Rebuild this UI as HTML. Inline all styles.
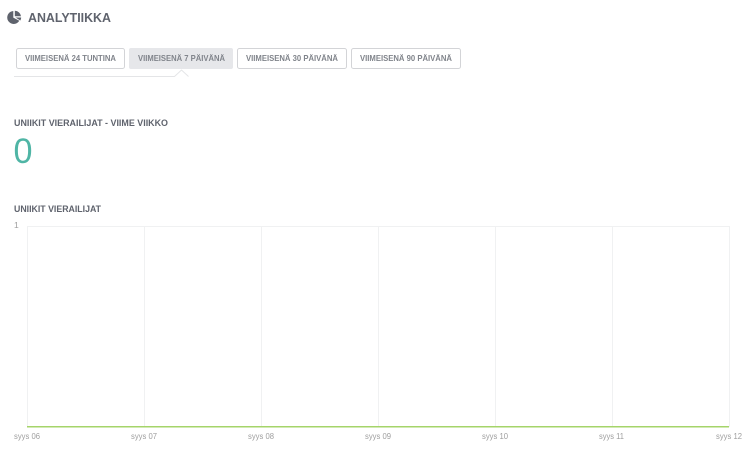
<!DOCTYPE html>
<html lang="fi">
<head>
<meta charset="utf-8">
<title>Analytiikka</title>
<style>
html,body{margin:0;padding:0;background:#fff;width:753px;height:452px;overflow:hidden}
svg{display:block}
text{font-family:"Liberation Sans",sans-serif}
.b{font-weight:700;font-size:8.5px;fill:#80848b}
.h{font-weight:700;font-size:9px;fill:#5f636d}
.a{font-size:8.5px;fill:#9e9e9e}
</style>
</head>
<body>
<svg width="753" height="452" viewBox="0 0 753 452" xmlns="http://www.w3.org/2000/svg">
<!-- header icon -->
<path d="M13.300 11A6.500 6.500 0 1 0 19.300 20.800L13.300 17.600Z" fill="#5f636d"/>
<path d="M14.800 10.800A6.200 6.200 0 0 1 21 16.200H14.800Z" fill="#5f636d"/>
<path d="M15.500 17.500H21.200A6 6 0 0 1 20.300 20.500Z" fill="#5f636d"/>
<text x="28" y="22" font-size="12.500" font-weight="700" fill="#5f636d" textLength="83" lengthAdjust="spacingAndGlyphs">ANALYTIIKKA</text>

<!-- buttons -->
<rect x="16.500" y="48.500" width="108" height="20" rx="2" fill="#fff" stroke="#d3d4d7"/>
<text class="b" x="25" y="61" textLength="91" lengthAdjust="spacingAndGlyphs">VIIMEISENÄ 24 TUNTINA</text>
<rect x="129" y="48" width="104" height="21" rx="2" fill="#e6e7ea"/>
<text class="b" x="138" y="61" textLength="87" lengthAdjust="spacingAndGlyphs">VIIMEISENÄ 7 PÄIVÄNÄ</text>
<rect x="237.500" y="48.500" width="109" height="20" rx="2" fill="#fff" stroke="#d3d4d7"/>
<text class="b" x="246" y="61" textLength="92" lengthAdjust="spacingAndGlyphs">VIIMEISENÄ 30 PÄIVÄNÄ</text>
<rect x="351.500" y="48.500" width="109" height="20" rx="2" fill="#fff" stroke="#d3d4d7"/>
<text class="b" x="360" y="61" textLength="92" lengthAdjust="spacingAndGlyphs">VIIMEISENÄ 90 PÄIVÄNÄ</text>

<!-- tab indicator -->
<path d="M14 76.500H174.500L181.500 70L188.500 76.500" fill="none" stroke="#e4e5e7"/>

<!-- stat -->
<text class="h" x="14" y="126" textLength="154" lengthAdjust="spacingAndGlyphs">UNIIKIT VIERAILIJAT - VIIME VIIKKO</text>
<text x="13.500" y="163" font-size="35" fill="#4fb5a5" textLength="19" lengthAdjust="spacingAndGlyphs">0</text>

<!-- chart -->
<text class="h" x="14" y="212" textLength="87" lengthAdjust="spacingAndGlyphs">UNIIKIT VIERAILIJAT</text>
<text class="a" x="14" y="228">1</text>
<g stroke="#f0f1f2" fill="none">
<path d="M27 226.500H729.500"/>
<path d="M27.500 226V427M144.500 226V427M261.500 226V427M378.500 226V427M495.500 226V427M612.500 226V427M729.500 226V427"/>
</g>
<rect x="27" y="426" width="702" height="1.500" fill="#a5d46a"/>
<g>
<text class="a" x="14" y="439" textLength="26" lengthAdjust="spacingAndGlyphs">syys 06</text>
<text class="a" x="131" y="439" textLength="26" lengthAdjust="spacingAndGlyphs">syys 07</text>
<text class="a" x="248" y="439" textLength="26" lengthAdjust="spacingAndGlyphs">syys 08</text>
<text class="a" x="365" y="439" textLength="26" lengthAdjust="spacingAndGlyphs">syys 09</text>
<text class="a" x="482" y="439" textLength="26" lengthAdjust="spacingAndGlyphs">syys 10</text>
<text class="a" x="599" y="439" textLength="25" lengthAdjust="spacingAndGlyphs">syys 11</text>
<text class="a" x="716" y="439" textLength="26" lengthAdjust="spacingAndGlyphs">syys 12</text>
</g>
</svg>
</body>
</html>
